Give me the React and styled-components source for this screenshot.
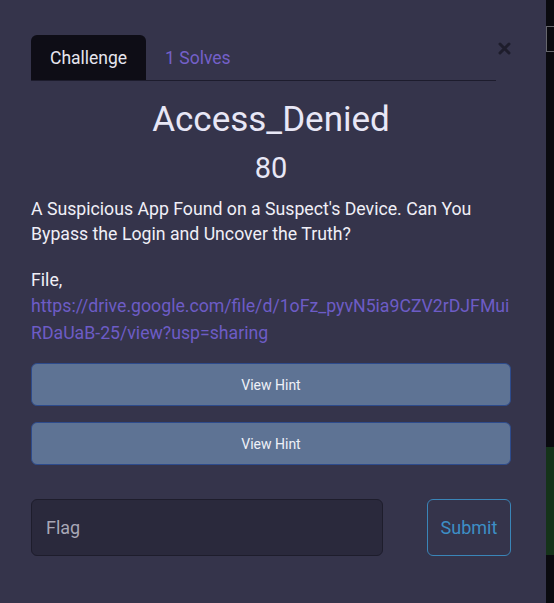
import styled, { createGlobalStyle } from "styled-components";

const Global = createGlobalStyle`
  body {
    margin: 0;
    background: #0a0a0f;
    font-family: Roboto, "Liberation Sans", sans-serif;
  }
`;

const Page = styled.div`
  display: flex;
  height: 603px;
  overflow: hidden;
`;

const Modal = styled.div`
  width: 546px;
  flex-shrink: 0;
  box-sizing: border-box;
  background: #35344b;
  padding: 35px 35px 0 31px;
  color: #ecebf5;
`;

const Header = styled.div`
  display: flex;
  align-items: flex-start;
`;

const Tabs = styled.div`
  flex: 1;
  display: flex;
  border-bottom: 1px solid #1d1c2d;
`;

const Tab = styled.div`
  height: 45px;
  padding: 0 19px;
  display: flex;
  align-items: center;
  font-size: 17.5px;
  border-radius: 6px 6px 0 0;
  background: ${(p) => (p.$active ? "#0e0d16" : "transparent")};
  color: ${(p) => (p.$active ? "#e6e5ef" : "#7460c9")};
`;

const Close = styled.div`
  width: 13px;
  height: 13px;
  margin: 7px 0 0 2px;
  display: flex;
`;

const Title = styled.h2`
  margin: 17px 0 0;
  font-size: 35px;
  font-weight: 400;
  line-height: 44px;
  text-align: center;
  color: #e8e7f6;
`;

const Points = styled.div`
  margin-top: 4px;
  font-size: 29px;
  line-height: 44px;
  text-align: center;
  color: #e8e7f6;
`;

const Text = styled.p`
  margin: 7px 0 0;
  font-size: 17.7px;
  line-height: 25px;
  color: #f0eff7;
`;

const Link = styled.a`
  color: #6d5cc6;
  text-decoration: none;
  line-height: 27px;
  word-break: break-all;
`;

const Hints = styled.div`
  margin-top: 16px;
  display: flex;
  flex-direction: column;
  gap: 16px;
`;

const HintButton = styled.button`
  height: 43px;
  border: 1px solid #2d4b8c;
  border-radius: 6px;
  background: #5e7394;
  color: #eef1f8;
  font-family: inherit;
  font-size: 14px;
`;

const FlagRow = styled.div`
  margin-top: 34px;
  display: flex;
  justify-content: space-between;
`;

const FlagInput = styled.input`
  width: 352px;
  height: 57px;
  box-sizing: border-box;
  border: 1px solid #1e1d2c;
  border-radius: 6px;
  background: #2a293c;
  padding: 0 14px;
  font-family: inherit;
  font-size: 18px;
  color: #e6e5ef;
  &::placeholder {
    color: #a8a7b6;
  }
`;

const SubmitButton = styled.button`
  width: 84px;
  height: 57px;
  border: 1px solid #3a85b8;
  border-radius: 6px;
  background: transparent;
  color: #3d8fc6;
  font-family: inherit;
  font-size: 18px;
`;

const Strip = styled.div`
  flex: 1;
  display: flex;
  flex-direction: column;
`;

const OutlineBox = styled.div`
  margin-top: 26px;
  height: 26px;
  border: 1px solid #66666c;
  border-right: none;
  box-sizing: border-box;
`;

const GreenBlock = styled.div`
  margin-top: 395px;
  height: 108px;
  background: #15331a;
`;

export default function App() {
  return (
    <Page>
      <Global />
      <Modal>
        <Header>
          <Tabs>
            <Tab $active>Challenge</Tab>
            <Tab>1 Solves</Tab>
          </Tabs>
          <Close>
            <svg width="13" height="13" viewBox="0 0 13 13">
              <path d="M2 2 L11 11 M11 2 L2 11" stroke="#1e1d2c" strokeWidth="3" strokeLinecap="round" />
            </svg>
          </Close>
        </Header>
        <Title>Access_Denied</Title>
        <Points>80</Points>
        <Text>A Suspicious App Found on a Suspect's Device. Can You Bypass the Login and Uncover the Truth?</Text>
        <Text style={{ marginTop: 21 }}>
          File,
          <br />
          <Link href="#">https://drive.google.com/file/d/1oFz_pyvN5ia9CZV2rDJFMuiRDaUaB-25/view?usp=sharing</Link>
        </Text>
        <Hints>
          <HintButton>View Hint</HintButton>
          <HintButton>View Hint</HintButton>
        </Hints>
        <FlagRow>
          <FlagInput placeholder="Flag" />
          <SubmitButton>Submit</SubmitButton>
        </FlagRow>
      </Modal>
      <Strip>
        <OutlineBox />
        <GreenBlock />
      </Strip>
    </Page>
  );
}
